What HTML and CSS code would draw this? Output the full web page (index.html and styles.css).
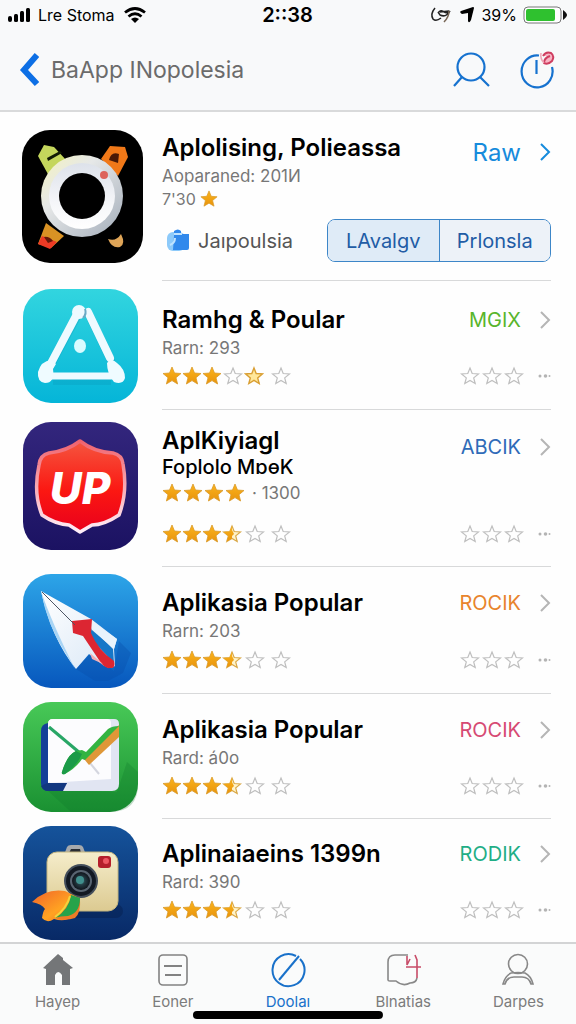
FILE: index.html
```html
<!DOCTYPE html>
<html lang="id">
<head>
<meta charset="utf-8">
<meta name="viewport" content="width=device-width, initial-scale=1">
<title>BaApp INopolesia</title>
<link rel="stylesheet" href="styles.css">
</head>
<body>
<svg class="defs" aria-hidden="true">
  <defs>
    <linearGradient id="gold" x1="0" y1="0" x2="0" y2="1"><stop offset="0" stop-color="#fbb41c"/><stop offset="1" stop-color="#e8930c"/></linearGradient>
    <symbol id="star-full" viewBox="0 0 20 20"><path d="M10 1l2.500 6 6.500.5-5 4.200 1.600 6.300L10 14.600 4.400 18 6 11.700 1 7.500 7.500 7z" fill="url(#gold)" stroke="#d99a2b" stroke-width=".8"/></symbol>
    <symbol id="star-empty" viewBox="0 0 20 20"><path d="M10 2l2.200 5.500 6.300.4-4.800 4 1.500 5.600L10 14.400l-5.200 3.100 1.500-5.600-4.800-4 6.300-.4z" fill="none" stroke="#bfbfbf" stroke-width="1.200"/></symbol>
    <symbol id="star-half" viewBox="0 0 20 20"><path d="M10 2l2.200 5.500 6.300.4-4.800 4 1.500 5.600L10 14.400l-5.200 3.100 1.500-5.600-4.800-4 6.300-.4z" fill="#fff3c9" stroke="#d9a848" stroke-width="1.200"/><path d="M10 2v4l2 4-2 2v2.400l-5.200 3.100 1.500-5.600-4.800-4 6.300-.4z" fill="url(#gold)"/></symbol>
    <symbol id="star-pale" viewBox="0 0 20 20"><path d="M10 2l2.200 5.500 6.300.4-4.800 4 1.500 5.600L10 14.400l-5.200 3.100 1.500-5.600-4.800-4 6.300-.4z" fill="#ffe79a" stroke="#d99f33" stroke-width="1.400"/></symbol>
    <symbol id="chevron" viewBox="0 0 12 20"><path d="M2 2l8 8-8 8" fill="none" stroke="currentColor" stroke-width="2"/></symbol>
    <symbol id="rate-35" viewBox="0 0 130 20"><use href="#star-full" width="20" height="20"/><use href="#star-full" x="20" width="20" height="20"/><use href="#star-full" x="40" width="20" height="20"/><use href="#star-half" x="60" width="20" height="20"/><use href="#star-empty" x="83" width="20" height="20"/><use href="#star-empty" x="109" width="20" height="20"/></symbol>
    <symbol id="rate-none" viewBox="0 0 92 20"><use href="#star-empty" x="1" width="20" height="20"/><use href="#star-empty" x="23" width="20" height="20"/><use href="#star-empty" x="45" width="20" height="20"/><g fill="#b4b4b4"><circle cx="81" cy="10" r="1.500"/><circle cx="86.500" cy="10" r="1.800"/><circle cx="90.500" cy="10" r="1"/></g></symbol>
  </defs>
</svg>

<div class="screen">
  <header class="top">
    <div class="status">
      <div class="status-side">
        <svg width="24" height="16" viewBox="0 0 24 16" aria-hidden="true"><rect x="0" y="9" width="4" height="6" rx="2"/><rect x="6" y="7" width="4" height="8" rx="1.500"/><rect x="12" y="4" width="4" height="11" rx="1.500"/><rect x="18" y="1" width="4" height="14" rx="1.500"/></svg>
        <span class="carrier">Lre Stoma</span>
        <svg width="22" height="16" viewBox="0 0 22 16" aria-hidden="true"><g fill="none" stroke="#000" stroke-width="2.800"><path d="M1 5.500Q11-2.500 21 5.500"/><path d="M4.500 9.500Q11 4 17.500 9.500"/></g><path d="M7 12q4-3 8 0l-4 4z"/></svg>
      </div>
      <time class="clock">2::38</time>
      <div class="status-side status-end">
        <svg width="24" height="18" viewBox="0 0 24 18" aria-hidden="true"><g fill="none" stroke="#222" stroke-width="1.500"><path d="M6 2Q1 8 4 13q3 3 8-1"/><path d="M9 7q3-4 6-1 3 2 6-1-4 7-10 4l-2-3M11 6l9-1"/><path d="M20 5q0 6-5 11" stroke="#765"/></g></svg>
        <svg width="16" height="17" viewBox="0 0 16 17" aria-hidden="true"><path d="M2 5L14 1q1 0 1 1l-3 12q-2 4-3 1V7L3 8Q0 6 2 5z"/></svg>
        <span class="percent">39%</span>
        <svg width="44" height="18" viewBox="0 0 44 18" aria-hidden="true"><rect x="1" y="1" width="37" height="16" rx="4" fill="#fff" stroke="#777"/><rect x="3" y="3" width="29" height="12" rx="2" fill="#2fc12f"/><path d="M40 4q4 3 4 5t-4 5z" fill="#111"/></svg>
      </div>
    </div>
    <nav class="nav" aria-label="Navigasi">
      <a class="back" href="#">
        <svg width="20" height="36" viewBox="0 0 20 36" aria-hidden="true"><path d="M18 3L5 18l13 14" fill="none" stroke="#0d6fe5" stroke-width="6"/></svg>
        <span>BaApp INopolesia</span>
      </a>
      <button class="icon-button" type="button" aria-label="Cari"><svg width="38" height="38" viewBox="0 0 38 38" aria-hidden="true"><g fill="none" stroke="#1672cf" stroke-width="2.200"><circle cx="19" cy="16" r="13.500"/><path d="M10 26l-8 9M28 26l9 9"/></g></svg></button>
      <button class="icon-button" type="button" aria-label="Riwayat"><svg width="38" height="38" viewBox="0 0 38 38" aria-hidden="true"><g fill="none" stroke="#1672cf" stroke-width="2.200"><path d="M21 4.500A15.500 16 0 1 0 34 16"/><path d="M18.500 9v14"/></g><path d="M25 5q3-5 8-3 4 3 1 8-4 4-8 2 0-5 6-7" fill="#f8b5c4" stroke="#cf3e60" stroke-width="2"/><path d="M23 2q-1 6 3 10" fill="none" stroke="#efa3b5" stroke-width="1.500"/></svg></button>
    </nav>
  </header>

  <main class="list">
    <article class="row featured">
      <svg class="app-icon" width="121" height="133" viewBox="0 0 121 133" aria-hidden="true">
        <defs><linearGradient id="dial" x1="0" y1="0" x2="1" y2="1"><stop offset="0" stop-color="#f5f3bd"/><stop offset=".35" stop-color="#e6e8e8"/><stop offset="1" stop-color="#a3adba"/></linearGradient><linearGradient id="dial2" x1="0" y1="0" x2="0" y2="1"><stop offset="0" stop-color="#dde2ea"/><stop offset=".6" stop-color="#f5f6f9"/><stop offset="1" stop-color="#fff"/></linearGradient></defs>
        <rect width="121" height="133" rx="28" fill="#000"/>
        <path d="M22 15l10 2 13 14-18 15L16 26z" fill="#c4d65c"/><path d="M25 28l13-7 2 2-14 8z" fill="#111a05"/>
        <path d="M79 29L88 16l15 1 3 10-10 19z" fill="#f07818"/><path d="M87 30q2-9 10-6l-1 9z" fill="#481906"/>
        <path d="M24 93l18 13-13 12-13-4z" fill="#d99224"/><path d="M20 106l15 6-7 7-12-5z" fill="#ed3a25"/><path d="M22 107q5-1 9 4l-5 2z" fill="#65190a"/>
        <path d="M86 109q8 3 13-5 5 10-1 13-8 2-12-8z" fill="#dfa558"/>
        <circle cx="60" cy="66" r="41" fill="url(#dial)"/><circle cx="60" cy="66" r="33" fill="url(#dial2)"/><circle cx="60" cy="66" r="23" fill="#000"/><circle cx="82" cy="45" r="4" fill="#dd635b"/>
      </svg>
      <div class="body">
        <div class="head"><h2 class="title">Aplolising, Polieassa</h2><a class="action blue" href="#">Raw <svg class="chev" aria-hidden="true"><use href="#chevron"/></svg></a></div>
        <p class="sub">Aoparaned: 201И</p>
        <p class="score">7'30 <svg width="18" height="18" aria-hidden="true"><use href="#star-full"/></svg></p>
        <div class="tools">
          <span class="category"><svg width="24" height="24" viewBox="0 0 24 24" aria-hidden="true"><rect x="1" y="3" width="18" height="19" rx="6" fill="#8dcafa"/><path d="M8 7V2q4-3 7 0v3h8v14q0 2-2 2H7z" fill="#3189ec"/><path d="M8 5h8M9 9q0 5-5 7" stroke="#bfe3ff" stroke-width="2" fill="none"/></svg>Jaıpoulsia</span>
          <div class="segments"><button type="button" class="segment selected">LAvalgv</button><button type="button" class="segment">Prlonsla</button></div>
        </div>
      </div>
    </article>

    <article class="row roomy">
      <svg class="app-icon" width="115" height="114" viewBox="0 0 115 114" aria-hidden="true">
        <defs><linearGradient id="cyan" x1="0" y1="0" x2="0" y2="1"><stop offset="0" stop-color="#32d5df"/><stop offset="1" stop-color="#05b5d8"/></linearGradient></defs>
        <rect width="115" height="114" rx="28" fill="url(#cyan)"/>
        <path d="M56 22L25 79M66 24l23 48M30 90h58" stroke="#078eb2" stroke-opacity=".25" stroke-width="8" transform="translate(0 2)"/>
        <g stroke="#eefaff" stroke-width="8" stroke-linecap="round"><path d="M54 25L26 78M65 23l22 46"/><path d="M28 87h60" stroke-width="7"/></g>
        <circle cx="56" cy="23" r="7" fill="#eefaff"/><path d="M60 29q4-4 2-9" fill="none" stroke="#69aac5" stroke-width="2"/>
        <path d="M15 83q3-11 13-12l5 4-3 5q2 14-8 14-8-1-7-11z" fill="#effbff"/><path d="M84 74q4-6 10 0 8 6 8 15-2 7-11 4-7-8-7-19z" fill="#effbff"/>
        <ellipse cx="57" cy="57" rx="6" ry="7" fill="#d9fbff"/>
      </svg>
      <div class="body">
        <div class="head"><h2 class="title">Ramhg &amp; Poular</h2><a class="action green" href="#">MGIX <svg class="chev" aria-hidden="true"><use href="#chevron"/></svg></a></div>
        <p class="sub">Rarn: 293</p>
        <div class="ratings"><svg class="rate" viewBox="0 0 130 20" role="img" aria-label="3,5 bintang"><use href="#star-full" width="20" height="20"/><use href="#star-full" x="20" width="20" height="20"/><use href="#star-full" x="40" width="20" height="20"/><use href="#star-empty" x="61" width="20" height="20"/><use href="#star-pale" x="82" width="20" height="20"/><use href="#star-empty" x="109" width="20" height="20"/></svg><svg class="rate-end" aria-hidden="true"><use href="#rate-none"/></svg></div>
      </div>
    </article>

    <article class="row double">
      <svg class="app-icon" width="115" height="128" viewBox="0 0 115 128" aria-hidden="true">
        <defs><linearGradient id="indigo" x1="0" y1="0" x2="0" y2="1"><stop offset="0" stop-color="#33267d"/><stop offset="1" stop-color="#1b1262"/></linearGradient><linearGradient id="shield" x1="0" y1="0" x2="0" y2="1"><stop offset="0" stop-color="#f5563f"/><stop offset=".55" stop-color="#fb1712"/><stop offset="1" stop-color="#e9001c"/></linearGradient><linearGradient id="rim" x1="0" y1="0" x2="0" y2="1"><stop offset="0" stop-color="#f0626d"/><stop offset="1" stop-color="#fff0fa"/></linearGradient></defs>
        <rect width="115" height="128" rx="28" fill="url(#indigo)"/>
        <path d="M57 19q14 11 33 12 9 2 10 11 5 28-4 51-15 10-27 10l-12 7-11-7q-14-1-27-10-9-22-3-50 1-10 10-12 18-2 31-12z" fill="url(#shield)" stroke="url(#rim)" stroke-width="3.500" stroke-linejoin="round"/>
        <text class="up-label" x="57" y="82" text-anchor="middle">UP</text>
      </svg>
      <div class="body">
        <div class="head"><div><h2 class="title">AplKiyiagl</h2><p class="subtitle">Foplolo MɒɵK</p></div><a class="action navy" href="#">ABCIK <svg class="chev" aria-hidden="true"><use href="#chevron"/></svg></a></div>
        <div class="ratings"><svg class="rate-four" viewBox="0 0 84 20" role="img" aria-label="4 bintang"><use href="#star-full" width="20" height="20"/><use href="#star-full" x="21" width="20" height="20"/><use href="#star-full" x="42" width="20" height="20"/><use href="#star-full" x="63" width="20" height="20"/></svg><span class="count">· 1300</span></div>
        <div class="ratings second"><svg class="rate" role="img" aria-label="3,5 bintang"><use href="#rate-35"/></svg><svg class="rate-end" aria-hidden="true"><use href="#rate-none"/></svg></div>
      </div>
    </article>

    <article class="row tall">
      <svg class="app-icon" width="115" height="114" viewBox="0 0 115 114" aria-hidden="true">
        <defs><linearGradient id="sky" x1="0" y1="0" x2="0" y2="1"><stop offset="0" stop-color="#2da5e8"/><stop offset="1" stop-color="#0757bd"/></linearGradient><linearGradient id="wing" x1="0" y1="0" x2="1" y2="1"><stop offset="0" stop-color="#fff"/><stop offset="1" stop-color="#d9e7f6"/></linearGradient></defs>
        <rect width="115" height="114" rx="28" fill="url(#sky)"/>
        <path d="M53 95l14-15 24 17 5-30 12 12-8 20-15 8H72z" fill="#064aa6" opacity=".3"/>
        <path d="M18 17l50 28 26 20-3 10 1 17q-6 5-16-4L66 80 53 95Q28 64 18 17z" fill="url(#wing)"/>
        <path d="M18 17q10 30 34 78l-9-15Q24 51 18 17z" fill="#a9d5f5"/>
        <path d="M69 54l21 21 1 14L66 63z" fill="#1677c8"/><path d="M69 48l25 17-3 10-22-19z" fill="#e9f3fc"/>
        <path d="M49 47l20-2-1 14q7 17 23 28 2 8-4 7-4 1-9-5L60 62l-10-3z" fill="#dc2632"/><path d="M67 79l13 11-11-5z" fill="#f4aeb4"/>
        <path d="M19 18l33 33" stroke="#4d5665" stroke-width="1"/>
      </svg>
      <div class="body">
        <div class="head"><h2 class="title">Aplikasia Popular</h2><a class="action orange" href="#">ROCIK <svg class="chev" aria-hidden="true"><use href="#chevron"/></svg></a></div>
        <p class="sub">Rarn: 203</p>
        <div class="ratings"><svg class="rate" role="img" aria-label="3,5 bintang"><use href="#rate-35"/></svg><svg class="rate-end" aria-hidden="true"><use href="#rate-none"/></svg></div>
      </div>
    </article>

    <article class="row">
      <svg class="app-icon" width="115" height="110" viewBox="0 0 115 110" aria-hidden="true">
        <defs><linearGradient id="leaf" x1="0" y1="0" x2="0" y2="1"><stop offset="0" stop-color="#48c957"/><stop offset="1" stop-color="#1a9132"/></linearGradient></defs>
        <rect width="115" height="110" rx="28" fill="url(#leaf)"/>
        <path d="M24 88l70 2 10-30 11 10v12q0 28-28 28H48z" fill="#0b7428" opacity=".25"/>
        <path d="M18 29q0-7 7-8h20v68H25q-7-1-7-8z" fill="#143f98"/>
        <path d="M25 22q0-5 5-5h61q5 0 5 5v60q0 7-7 7H38l6-8H27z" fill="#e1e5f2"/><path d="M25 22q0-5 5-5h54q4 0 4 4v56l-63 4z" fill="#fcfcfe"/>
        <path d="M18 84q2 5 7 5h15l4-8H24z" fill="#123780"/><path d="M67 61l9 11" stroke="#d4d6df" stroke-width="2"/>
        <path d="M26 25l31 26" stroke="#28a666" stroke-width="3"/>
        <path d="M61 57L96 23v12L66 63z" fill="#df9738"/>
        <path d="M39 70q5-17 14-21l6-1 4 2 22-23q4-3 11-3L66 54l-4 4-3-1q-6 9-17 15-4 1-3-2z" fill="#33b441"/>
        <path d="M39 70q5-17 14-21l6 3q-5 12-17 20-4 1-3-2z" fill="#1b9a48"/>
      </svg>
      <div class="body">
        <div class="head"><h2 class="title">Aplikasia Popular</h2><a class="action pink" href="#">ROCIK <svg class="chev" aria-hidden="true"><use href="#chevron"/></svg></a></div>
        <p class="sub">Rard: á0o</p>
        <div class="ratings"><svg class="rate" role="img" aria-label="3,5 bintang"><use href="#rate-35"/></svg><svg class="rate-end" aria-hidden="true"><use href="#rate-none"/></svg></div>
      </div>
    </article>

    <article class="row last">
      <svg class="app-icon" width="115" height="114" viewBox="0 0 115 114" aria-hidden="true">
        <defs><linearGradient id="navy" x1="0" y1="0" x2="0" y2="1"><stop offset="0" stop-color="#15539b"/><stop offset="1" stop-color="#082966"/></linearGradient><linearGradient id="cream" x1="0" y1="0" x2="0" y2="1"><stop offset="0" stop-color="#f5edcb"/><stop offset="1" stop-color="#dcca91"/></linearGradient><linearGradient id="flame" x1="0" y1="0" x2="1" y2="1"><stop offset="0" stop-color="#f1632a"/><stop offset=".6" stop-color="#ffa322"/><stop offset="1" stop-color="#f46a25"/></linearGradient><radialGradient id="lens"><stop offset="0" stop-color="#3f8c8b"/><stop offset=".45" stop-color="#243b43"/><stop offset="1" stop-color="#10141c"/></radialGradient></defs>
        <rect width="115" height="114" rx="28" fill="url(#navy)"/>
        <rect x="32" y="78" width="68" height="14" rx="7" fill="#061b49" opacity=".4"/>
        <path d="M41 29l3-8q1-2 4-2h8q3 0 4 2l3 8z" fill="#a6a9ac"/><path d="M46 27l2-4h9l1 4z" fill="#292d33"/>
        <rect x="24" y="26" width="71" height="59" rx="10" fill="url(#cream)" stroke="#c4b57f"/>
        <rect x="75" y="30" width="13" height="12" rx="3" fill="#b51f2b"/><circle cx="83" cy="35" r="3" fill="#ee5762"/>
        <circle cx="58" cy="55" r="17" fill="#444e5b"/><circle cx="58" cy="55" r="15" fill="#131923"/><circle cx="58" cy="55" r="11" fill="#596572"/><circle cx="58" cy="55" r="9" fill="url(#lens)"/><circle cx="57" cy="54" r="4" fill="#408f8d"/>
        <path d="M9 76q14-14 33-11l12 6-3 18q-8 8-20 4-7 5-12-1 1-7 3-9-3-5-13-7z" fill="url(#flame)"/><path d="M48 70l9 2q1 15-5 20-8 3-18 1z" fill="#ee7c27"/><path d="M32 92q14-8 16-23l9 3q0 15-12 18-8 0-13 2z" fill="#26a34a"/><path d="M32 91q12-9 15-21" stroke="#f3d43c" stroke-width="2" fill="none"/>
      </svg>
      <div class="body">
        <div class="head"><h2 class="title">Aplinaiaeins 1399n</h2><a class="action teal" href="#">RODIK <svg class="chev" aria-hidden="true"><use href="#chevron"/></svg></a></div>
        <p class="sub">Rard: 390</p>
        <div class="ratings"><svg class="rate" role="img" aria-label="3,5 bintang"><use href="#rate-35"/></svg><svg class="rate-end" aria-hidden="true"><use href="#rate-none"/></svg></div>
      </div>
    </article>
  </main>

  <nav class="tabs" aria-label="Tab">
    <a class="tab" href="#"><svg width="36" height="36" viewBox="0 0 36 36" aria-hidden="true"><path d="M18 2l5 4v2l10 8-3 1v16h-8V23q-4-6-7 0v10H6V17l-3-1z" fill="#747678"/></svg><span>Hayep</span></a>
    <a class="tab" href="#"><svg width="36" height="36" viewBox="0 0 36 36" aria-hidden="true"><g fill="none" stroke="#828282" stroke-width="1.600"><rect x="4" y="3" width="28" height="30" rx="4"/><path d="M9 14h18M10 23h16" stroke-width="2"/></g></svg><span>Eoner</span></a>
    <a class="tab current" href="#" aria-current="page"><svg width="36" height="36" viewBox="0 0 36 36" aria-hidden="true"><g fill="none" stroke="#1971ca" stroke-width="2"><path d="M26 4A16 16 0 1 0 30 7"/><path d="M9 28L29 4"/></g></svg><span>Doolaı</span></a>
    <a class="tab" href="#"><svg width="36" height="36" viewBox="0 0 36 36" aria-hidden="true"><g fill="none" stroke-width="1.600"><path d="M23 3H10q-7 0-7 7v18q0 1 2 1h6q7 6 14 2 6 0 7-5" stroke="#888"/><path d="M32 26V8l-2-5M22 4v9l3-6M21 15h15" stroke="#c84c68"/></g></svg><span>Blnatias</span></a>
    <a class="tab" href="#"><svg width="36" height="36" viewBox="0 0 36 36" aria-hidden="true"><g fill="none" stroke="#888" stroke-width="1.600"><circle cx="18" cy="12" r="9.500"/><path d="M11 21q-6 3-8 11h2q2-7 9-7h8q7 0 9 7h2q-2-8-8-11-7-1-14 0"/></g></svg><span>Darpes</span></a>
    <span class="home-indicator"></span>
  </nav>
</div>
</body>
</html>
```

FILE: styles.css
```css
* { box-sizing: border-box; }

body {
  margin: 0;
  background: #fefefe;
  color: #000;
  font-family: Inter, "Liberation Sans", sans-serif;
}

h2, p { margin: 0; }
a { color: inherit; text-decoration: none; }
button { font: inherit; cursor: pointer; }
svg { display: block; flex: none; }

.defs { position: absolute; width: 0; height: 0; }

.screen {
  display: flex;
  flex-direction: column;
  min-height: 100vh;
}

/* Status bar and navigation */
.top {
  background: #f8f9fa;
  border-bottom: 2px solid #d9dadb;
}

.status {
  display: grid;
  grid-template-columns: 1fr auto 1fr;
  align-items: center;
  height: 29px;
  padding: 0 9px 0 8px;
}

.status-side { display: flex; align-items: center; gap: 6px; }
.status-end { justify-content: flex-end; }
.carrier { margin-right: 3px; font-size: 16px; }
.clock { font-size: 20px; font-weight: 600; }
.percent { font-size: 16px; }

.nav {
  display: flex;
  align-items: center;
  gap: 28px;
  height: 81px;
  padding: 0 20px 0 19px;
}

.back {
  display: flex;
  flex: 1;
  align-items: center;
  gap: 12px;
  color: #6b6b6b;
  font-size: 23px;
}

.icon-button { padding: 0; border: 0; background: none; }

/* App list */
.list { flex: 1; }

.row {
  display: grid;
  grid-template-columns: 120px 1fr;
  gap: 20px;
  padding: 0 25px 0 22px;
}

.app-icon { align-self: center; margin-left: 1px; }
.featured .app-icon { margin-left: 0; }
.double .app-icon { align-self: start; margin-top: 12px; }
.last .app-icon { align-self: end; margin-bottom: 2px; }

.up-label {
  fill: #fff;
  font: italic 800 44px Inter, "Liberation Sans", sans-serif;
}

.body {
  min-width: 0;
  padding: 20px 0 16px;
  border-bottom: 1px solid #d8d9da;
}

.featured .body { padding-bottom: 18px; }
.roomy .body { padding: 23px 0 17px; }
.double .body { padding-top: 15px; }
.tall .body { padding-bottom: 18px; }
.last .body { padding-top: 19px; border-bottom: 0; }

.head { display: flex; justify-content: space-between; }
.double .action { margin-top: 6px; }

.title {
  font-size: 24px;
  font-weight: 600;
  line-height: 32px;
  white-space: nowrap;
}

.subtitle { font-size: 20px; font-weight: 500; line-height: 20px; }

.sub, .score, .count { color: #777; font-size: 17px; line-height: 24px; }

.score { display: flex; align-items: center; gap: 4px; font-size: 16px; line-height: 22px; }

.action {
  display: flex;
  align-items: center;
  gap: 18px;
  height: 32px;
  font-size: 20px;
}

.chev { width: 12px; height: 20px; color: #b5b5b5; }
.blue, .blue .chev { color: #168bdc; }
.blue { margin-top: 4px; font-size: 24px; }
.green { color: #59b52c; }
.navy { color: #2f6bb8; }
.orange { color: #e8842c; }
.pink { color: #d64a73; }
.teal { color: #1fae86; }

.ratings { display: flex; align-items: center; height: 32px; }
.tall .ratings { margin: 1px 0 -1px; }
.second { margin-top: 9px; }
.rate { width: 130px; height: 20px; }
.rate-four { width: 84px; height: 20px; }
.rate-end { width: 92px; height: 20px; margin-left: auto; }
.count { margin-left: 6px; }

.featured .head { height: 32px; }

.tools {
  display: flex;
  align-items: center;
  justify-content: space-between;
  margin-top: 9px;
}

.category { display: flex; align-items: center; gap: 8px; padding-left: 4px; color: #555; font-size: 20px; }

.segments {
  display: flex;
  width: 224px;
  height: 43px;
  overflow: hidden;
  border: 1px solid #3d86c8;
  border-radius: 8px;
}

.segment {
  flex: 1;
  padding: 0;
  border: 0;
  background: #edf2f8;
  color: #225ca5;
  font-size: 20px;
}

.selected { background: #dfebf7; border-right: 1px solid #3d86c8; }

/* Tab bar */
.tabs {
  position: relative;
  display: grid;
  grid-template-columns: repeat(5, 1fr);
  height: 82px;
  padding-top: 8px;
  background: #fafbfb;
  border-top: 2px solid #d3d4d5;
}

.tab {
  display: flex;
  flex-direction: column;
  align-items: center;
  gap: 4px;
  color: #7c7c7c;
  font-size: 15px;
  line-height: 20px;
}

.current { color: #1971ca; }

.home-indicator {
  position: absolute;
  bottom: 5px;
  left: 50%;
  width: 33%;
  height: 8px;
  border-radius: 4px;
  background: #000;
  transform: translateX(-50%);
}
```
